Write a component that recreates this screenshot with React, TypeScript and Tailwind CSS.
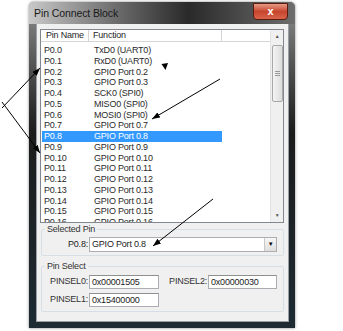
const rows = [
  ["P0.0", "TxD0 (UART0)"],
  ["P0.1", "RxD0 (UART0)"],
  ["P0.2", "GPIO Port 0.2"],
  ["P0.3", "GPIO Port 0.3"],
  ["P0.4", "SCK0 (SPI0)"],
  ["P0.5", "MISO0 (SPI0)"],
  ["P0.6", "MOSI0 (SPI0)"],
  ["P0.7", "GPIO Port 0.7"],
  ["P0.8", "GPIO Port 0.8"],
  ["P0.9", "GPIO Port 0.9"],
  ["P0.10", "GPIO Port 0.10"],
  ["P0.11", "GPIO Port 0.11"],
  ["P0.12", "GPIO Port 0.12"],
  ["P0.13", "GPIO Port 0.13"],
  ["P0.14", "GPIO Port 0.14"],
  ["P0.15", "GPIO Port 0.15"],
  ["P0.16", "GPIO Port 0.16"],
];

function TextBox({ value, w }: { value: string; w: string }) {
  return (
    <div
      className={`${w} h-[14px] bg-white border border-[#abadb3] border-t-[#8e8f8f] pl-[2px] leading-[12px] text-[#222]`}
    >
      {value}
    </div>
  );
}

export default function App() {
  return (
    <div
      className="relative w-[343px] h-[331px] bg-white overflow-hidden text-[9px] tracking-[-0.2px] text-[#1e1e1e]"
      style={{ fontFamily: '"Liberation Sans", Arial, sans-serif' }}
    >
      {/* window */}
      <div className="ml-[29px] mt-[2px] w-[266px] h-[326px] flex flex-col rounded-t-[5px] bg-gradient-to-b from-[#8f8f8f] via-[#1c1c1c] via-40% to-[#1d2b33] shadow-[0_0_3px_rgba(0,0,0,0.5)]">
        {/* title bar */}
        <div className="h-[22px] flex items-start rounded-t-[5px] bg-gradient-to-r from-[#c9c9c9] via-[#2a2a2a] via-60% to-[#6e6e6e]">
          <span className="ml-[5px] mt-[5px] text-[10.5px] tracking-[-0.1px] text-[#1a1a1a] leading-[12px]">
            Pin Connect Block
          </span>
          <div className="ml-auto mr-[7px] mt-[1px] w-[35px] h-[17px] rounded-b-[4px] border border-[#5a1a10] bg-gradient-to-b from-[#e49a86] via-[#c7442d] to-[#d8644a] flex items-center justify-center">
            <span className="text-white font-bold text-[11px] leading-none">x</span>
          </div>
        </div>

        {/* client */}
        <div className="flex-1 ml-[7px] mr-[6px] mb-[6px] bg-[#f0f0f0] pt-[5px] pl-[3px] flex flex-col border border-[#9aa0a6] border-t-0">
          {/* list view */}
          <div className="w-[244px] h-[194px] bg-white border border-[#828790] flex overflow-hidden">
            <div className="flex-1 flex flex-col overflow-hidden">
              <div className="h-[12px] flex border-b border-[#d5d5d5] text-[#1e1e1e] leading-[11px]">
                <div className="w-[48px] pl-[5px] border-r border-[#d5d5d5]">Pin Name</div>
                <div className="w-[133px] pl-[4px] border-r border-[#d5d5d5]">Function</div>
                <div className="flex-1" />
              </div>
              <div className="pt-[3px] pl-[1px]">
                {rows.map(([pin, fn]) => {
                  const sel = pin === "P0.8";
                  return (
                    <div
                      key={pin}
                      className={`h-[10.75px] w-[180px] flex leading-[10.75px] ${
                        sel ? "bg-[#3399ff] text-white" : "text-[#2a2a2a]"
                      }`}
                    >
                      <div className="w-[52px] pl-[2px]">{pin}</div>
                      <div>{fn}</div>
                    </div>
                  );
                })}
              </div>
            </div>
            {/* scrollbar */}
            <div className="w-[13px] bg-[#f0f0f0] border-l border-[#e3e3e3] flex flex-col items-center">
              <div className="h-[14px] flex items-center justify-center text-[5px] text-[#555]">▲</div>
              <div className="mt-[1px] w-[11px] h-[57px] rounded-[2px] border border-[#a8a8a8] bg-gradient-to-r from-[#f4f4f4] to-[#dcdcdc] flex flex-col items-center justify-center gap-[1px]">
                <div className="w-[5px] h-px bg-[#999]" />
                <div className="w-[5px] h-px bg-[#999]" />
                <div className="w-[5px] h-px bg-[#999]" />
              </div>
              <div className="mt-auto h-[12px] flex items-center justify-center text-[5px] text-[#555]">▼</div>
            </div>
          </div>

          {/* Selected Pin */}
          <fieldset className="mt-[1px] ml-[1px] w-[243px] h-[32px] border border-[#d5dfe5] rounded-[2px]">
            <legend className="ml-[3px] px-[2px] leading-[11px] text-[#333]">Selected Pin</legend>
            <div className="flex items-center mt-[2px]">
              <div className="w-[47px] pr-[1px] text-right">P0.8:</div>
              <div className="w-[188px] h-[15px] bg-white border border-[#abadb3] flex items-center pl-[2px]">
                <span className="flex-1 text-[#222]">GPIO Port 0.8</span>
                <div className="w-[12px] h-[13px] border-l border-[#c8c8c8] bg-gradient-to-b from-[#f7f7f7] to-[#dedede] flex items-center justify-center text-[6px] text-black">
                  ▼
                </div>
              </div>
            </div>
          </fieldset>

          {/* Pin Select */}
          <fieldset className="mt-[5px] ml-[1px] w-[243px] h-[51px] border border-[#d5dfe5] rounded-[2px]">
            <legend className="ml-[3px] px-[2px] leading-[11px] text-[#333]">Pin Select</legend>
            <div className="flex flex-col gap-[4px] mt-[3px] text-[#333]">
              <div className="flex items-center">
                <div className="w-[47px] pr-[1px] text-right">PINSEL0:</div>
                <TextBox value="0x00001505" w="w-[70px]" />
                <div className="w-[49px] pr-[1px] text-right">PINSEL2:</div>
                <TextBox value="0x00000030" w="w-[69px]" />
              </div>
              <div className="flex items-center">
                <div className="w-[47px] pr-[1px] text-right">PINSEL1:</div>
                <TextBox value="0x15400000" w="w-[70px]" />
              </div>
            </div>
          </fieldset>
        </div>
      </div>

      {/* annotation arrows */}
      <svg className="absolute inset-0 pointer-events-none" width="343" height="331">
        <defs>
          <marker id="ah" markerWidth="8" markerHeight="6" refX="8" refY="3" orient="auto" markerUnits="userSpaceOnUse">
            <path d="M0 0 L8 3 L0 6 Z" fill="#000" />
          </marker>
        </defs>
        <line x1="2" y1="108" x2="40" y2="68" stroke="#000" strokeWidth="1" markerEnd="url(#ah)" />
        <line x1="2" y1="102" x2="40" y2="153" stroke="#000" strokeWidth="1" markerEnd="url(#ah)" />
        <polygon points="161.5,64 168,63 165.5,70" fill="#000" />
        <line x1="220" y1="79" x2="152" y2="119" stroke="#000" strokeWidth="1" markerEnd="url(#ah)" />
        <line x1="213" y1="199" x2="153" y2="246" stroke="#000" strokeWidth="1" markerEnd="url(#ah)" />
      </svg>
    </div>
  );
}
